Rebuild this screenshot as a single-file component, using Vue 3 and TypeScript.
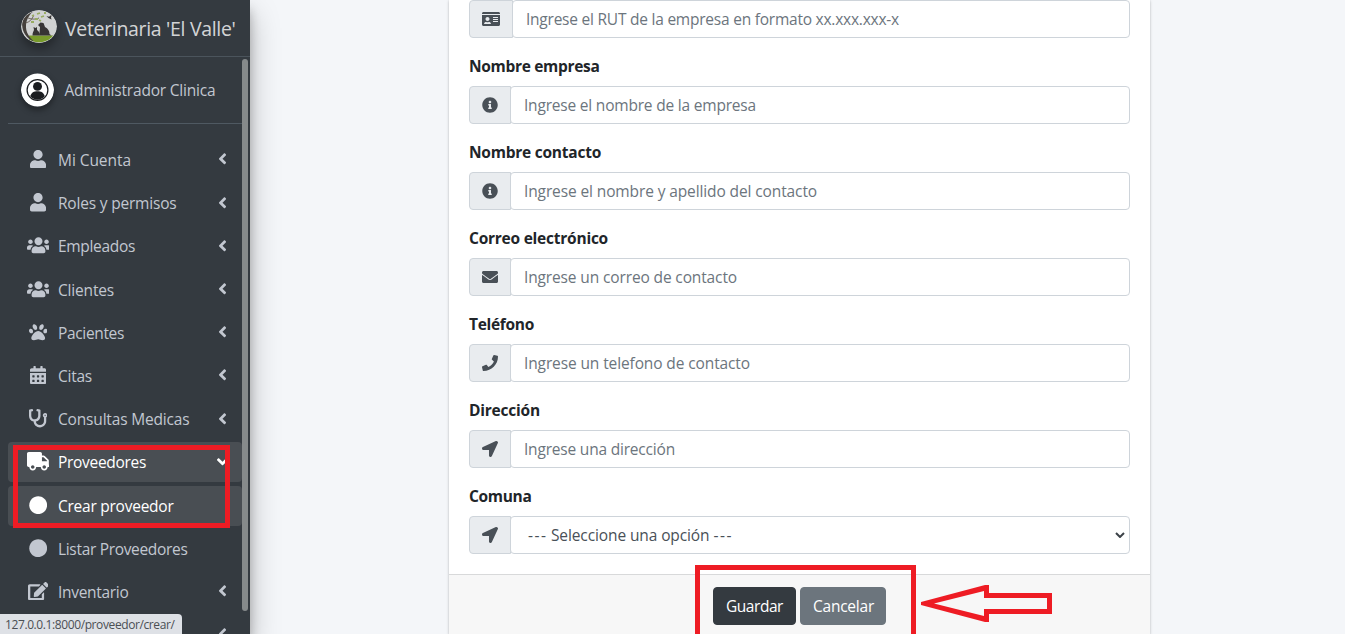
<script setup lang="ts">
interface Glyph { w: number; d: string }
interface NavItem { label: string; icon: string; width: number; state: 'closed' | 'open' | 'active' | 'leaf' }
interface Field { label: string; labelWidth: number; icon: string; hint: string; hintWidth: number; kind?: 'select' }

const cell = (x: number, y: number) =>
  `M${x} ${y}c0-6.600 5.400-12 12-12h40c6.600 0 12 5.400 12 12v40c0 6.600-5.400 12-12 12h-40c-6.600 0-12-5.400-12-12z`
const line = (y: number) =>
  `M352 ${y}c0-4.400 3.600-8 8-8h144c4.400 0 8 3.600 8 8v16c0 4.400-3.600 8-8 8H360c-4.400 0-8-3.600-8-8z`

const glyphs: Record<string, Glyph> = {
  user: { w: 448, d: 'M224 256c70.7 0 128-57.3 128-128S294.7 0 224 0 96 57.300 96 128s57.300 128 128 128zm89.600 32h-16.700c-22.200 10.200-46.900 16-72.900 16s-50.600-5.800-72.900-16h-16.700C60.200 288 0 348.200 0 422.400V464c0 26.500 21.500 48 48 48h352c26.500 0 48-21.500 48-48v-41.600c0-74.200-60.200-134.400-134.400-134.400z' },
  users: { w: 640, d: 'M96 224c35.300 0 64-28.700 64-64s-28.700-64-64-64-64 28.700-64 64 28.700 64 64 64zm448 0c35.300 0 64-28.700 64-64s-28.700-64-64-64-64 28.700-64 64 28.700 64 64 64zm32 32h-64c-17.600 0-33.500 7.100-45.100 18.600 40.300 22.100 68.900 62 75.100 109.400h66c17.700 0 32-14.300 32-32v-32c0-35.300-28.700-64-64-64zm-256 0c61.900 0 112-50.100 112-112S381.900 32 320 32 208 82.100 208 144s50.100 112 112 112zm76.800 32h-8.300c-20.800 10-43.900 16-68.500 16s-47.600-6-68.500-16h-8.300C179.600 288 128 339.600 128 403.200V432c0 26.500 21.500 48 48 48h288c26.500 0 48-21.500 48-48v-28.800c0-63.600-51.600-115.200-115.200-115.200zm-223.700-13.400C161.500 263.100 145.600 256 128 256H64c-35.300 0-64 28.700-64 64v32c0 17.700 14.300 32 32 32h65.900c6.300-47.400 34.900-87.300 75.200-109.400z' },
  paw: { w: 512, d: 'M256 224c-79.410 0-192 122.760-192 200.250 0 34.900 26.810 55.750 71.740 55.750 48.840 0 81.090-25.080 120.260-25.080 39.510 0 71.850 25.080 120.260 25.080 44.930 0 71.740-20.850 71.740-55.750C448 346.760 335.410 224 256 224zM108.720 211.390c-10.400-34.650-42.440-57.090-71.560-50.130s-44.290 40.690-33.890 75.340 42.440 57.090 71.560 50.130 44.290-40.690 33.890-75.340zM193.440 190.610c30.940-8.140 42.930-49.420 26.780-92.190s-54.340-70.860-85.280-62.720-42.930 49.420-26.780 92.190 54.340 70.860 85.280 62.720zM474.840 161.260c-29.120-6.960-61.160 15.480-71.560 50.130s4.770 68.380 33.890 75.340 61.160-15.480 71.560-50.130-4.770-68.380-33.890-75.340zM318.560 190.610c30.940 8.140 69.130-19.940 85.280-62.720s4.160-84.050-26.780-92.190-69.130 19.940-85.280 62.720-4.160 84.050 26.780 92.190z' },
  calendar: { w: 448, d: 'M0 464c0 26.500 21.500 48 48 48h352c26.500 0 48-21.500 48-48V192H0zM400 64h-48V16c0-8.800-7.200-16-16-16h-32c-8.800 0-16 7.200-16 16v48H160V16c0-8.800-7.200-16-16-16h-32c-8.800 0-16 7.200-16 16v48H48C21.500 64 0 85.500 0 112v48h448v-48c0-26.500-21.500-48-48-48z' + [64, 192, 320].map(x => cell(x, 268) + cell(x, 396)).join('') },
  stethoscope: { w: 512, d: 'M447.100 112c-34.200.5-62.300 28.400-63 62.600-.5 24.300 12.500 45.600 32 56.800V344c0 57.300-50.200 104-112 104-60 0-109.200-44.100-111.900-99.200C265 333.800 320 269.200 320 192V36.600c0-11.400-8.100-21.300-19.300-23.500L237.800.5c-13-2.600-25.600 5.800-28.200 18.800L206.400 35c-2.600 13 5.800 25.600 18.800 28.200l30.700 6.100v121.400c0 52.900-42.200 96.700-95.100 97.200-53.400.5-96.900-42.700-96.900-96V69.400l30.700-6.100c13-2.600 21.400-15.200 18.800-28.200l-3.100-15.700C107.700 6.400 95.100-2 82.100.6L19.300 13C8.100 15.300 0 25.100 0 36.600V192c0 77.300 55.100 142 128.100 156.800C130.700 439.200 208.600 512 304 512c97 0 176-75.400 176-168V231.400c19.100-11.100 32-31.700 32-55.400 0-35.700-29.200-64.500-64.900-64zm.9 80c-8.800 0-16-7.200-16-16s7.200-16 16-16 16 7.200 16 16-7.200 16-16 16z' },
  truck: { w: 640, d: 'M624 352h-16V243.900c0-12.700-5.100-24.900-14.100-33.900L494 110.100c-9-9-21.200-14.100-33.900-14.100H416V48c0-26.500-21.500-48-48-48H48C21.500 0 0 21.500 0 48v320c0 26.500 21.500 48 48 48h16c0 53 43 96 96 96s96-43 96-96h128c0 53 43 96 96 96s96-43 96-96h48c8.800 0 16-7.200 16-16v-32c0-8.800-7.200-16-16-16zM160 464c-26.500 0-48-21.500-48-48s21.500-48 48-48 48 21.500 48 48-21.500 48-48 48zm320 0c-26.500 0-48-21.500-48-48s21.500-48 48-48 48 21.500 48 48-21.500 48-48 48zm80-208H416V144h44.100l99.900 99.900z' },
  circle: { w: 512, d: 'M256 8C119 8 8 119 8 256s111 248 248 248 248-111 248-248S393 8 256 8z' },
  edit: { w: 576, d: 'M402.600 83.200l90.200 90.200c3.800 3.800 3.800 10 0 13.800L274.400 405.600l-92.800 10.300c-12.400 1.400-22.900-9.100-21.500-21.500l10.300-92.800L388.800 83.200c3.800-3.800 10-3.800 13.800 0zm162-22.900l-48.800-48.800c-15.200-15.200-39.900-15.200-55.200 0l-35.400 35.400c-3.800 3.800-3.800 10 0 13.800l90.200 90.200c3.800 3.800 10 3.800 13.800 0l35.400-35.400c15.200-15.300 15.200-40 0-55.200zM384 346.200V448H64V128h229.800c3.200 0 6.200-1.300 8.500-3.500l40-40c7.600-7.600 2.200-20.500-8.500-20.500H48C21.500 64 0 85.500 0 112v352c0 26.500 21.500 48 48 48h352c26.500 0 48-21.500 48-48V306.200c0-10.700-12.900-16-20.500-8.500l-40 40c-2.200 2.300-3.500 5.300-3.500 8.500z' },
  angle: { w: 256, d: 'M31.700 239l136-136c9.400-9.400 24.600-9.400 33.900 0l22.600 22.600c9.400 9.400 9.400 24.600 0 33.900L127.900 256l96.400 96.400c9.400 9.400 9.400 24.600 0 33.900L201.700 409c-9.400 9.400-24.600 9.400-33.900 0l-136-136c-9.500-9.400-9.500-24.600-.1-34z' },
  card: { w: 576, d: 'M528 32H48C21.500 32 0 53.500 0 80v16h576V80c0-26.500-21.500-48-48-48zM0 432c0 26.500 21.500 48 48 48h480c26.500 0 48-21.500 48-48V128H0zM176 192c35.300 0 64 28.700 64 64s-28.700 64-64 64-64-28.700-64-64 28.700-64 64-64zM67.100 396.200C75.500 370.500 99.600 352 128 352h8.200c12.300 5.100 25.700 8 39.800 8s27.600-2.900 39.800-8h8.200c28.400 0 52.500 18.500 60.900 44.200 3.200 9.900-5.200 19.800-15.600 19.800H82.700c-10.400 0-18.800-10-15.600-19.800z' + line(200) + line(264) + line(328) },
  info: { w: 512, d: 'M256 8C119 8 8 119 8 256s111 248 248 248 248-111 248-248S393 8 256 8zm0 110c23.200 0 42 18.800 42 42s-18.800 42-42 42-42-18.800-42-42 18.800-42 42-42zm56 254c0 6.600-5.400 12-12 12h-88c-6.600 0-12-5.400-12-12v-24c0-6.600 5.400-12 12-12h12v-64h-12c-6.600 0-12-5.400-12-12v-24c0-6.600 5.400-12 12-12h64c6.600 0 12 5.400 12 12v100h12c6.600 0 12 5.400 12 12z' },
  envelope: { w: 512, d: 'M502.300 190.800c3.900-3.100 9.700-.2 9.700 4.700V400c0 26.500-21.500 48-48 48H48c-26.500 0-48-21.500-48-48V195.600c0-5 5.700-7.800 9.700-4.700 22.400 17.400 52.100 39.500 154.100 113.600 21.100 15.400 56.700 47.800 92.200 47.600 35.700.3 72-32.800 92.300-47.600 102-74.100 131.600-96.300 154-113.700zM256 320c23.200.4 56.600-29.200 73.400-41.400 132.700-96.300 142.800-104.700 173.400-128.700 5.800-4.500 9.200-11.500 9.200-18.900v-19c0-26.500-21.500-48-48-48H48C21.500 64 0 85.500 0 112v19c0 7.400 3.400 14.300 9.200 18.900 30.600 23.900 40.700 32.400 173.400 128.700 16.800 12.200 50.200 41.800 73.400 41.400z' },
  phone: { w: 512, d: 'M493.400 24.600l-104-24c-11.300-2.600-22.900 3.300-27.500 13.900l-48 112c-4.200 9.800-1.400 21.300 6.900 28l60.600 49.600c-36 76.700-98.900 140.500-177.200 177.200l-49.600-60.600c-6.800-8.300-18.200-11.100-28-6.900l-112 48C3.900 366.500-2 378.100.6 389.400l24 104C27.100 504.200 36.700 512 48 512c256.100 0 464-207.500 464-464 0-11.200-7.700-20.900-18.600-23.400z' },
  arrow: { w: 512, d: 'M444.520 3.520L28.740 195.420c-47.970 22.390-31.980 92.750 19.190 92.750h175.910v175.910c0 51.170 70.360 67.170 92.750 19.190l191.900-415.780c15.990-38.390-25.590-79.970-63.970-63.970z' },
}

const nav: NavItem[] = [
  { label: 'Mi Cuenta', icon: 'user', width: 73, state: 'closed' },
  { label: 'Roles y permisos', icon: 'user', width: 118.5, state: 'closed' },
  { label: 'Empleados', icon: 'users', width: 77, state: 'closed' },
  { label: 'Clientes', icon: 'users', width: 56, state: 'closed' },
  { label: 'Pacientes', icon: 'paw', width: 66, state: 'closed' },
  { label: 'Citas', icon: 'calendar', width: 34, state: 'closed' },
  { label: 'Consultas Medicas', icon: 'stethoscope', width: 131.5, state: 'closed' },
  { label: 'Proveedores', icon: 'truck', width: 88, state: 'open' },
  { label: 'Crear proveedor', icon: 'circle', width: 115.5, state: 'active' },
  { label: 'Listar Proveedores', icon: 'circle', width: 129.5, state: 'leaf' },
  { label: 'Inventario', icon: 'edit', width: 70.5, state: 'closed' },
  { label: '', icon: 'edit', width: 0, state: 'closed' },
]

const fields: Field[] = [
  { label: '', labelWidth: 0, icon: 'card', hint: 'Ingrese el RUT de la empresa en formato xx.xxx.xxx-x', hintWidth: 373 },
  { label: 'Nombre empresa', labelWidth: 130.5, icon: 'info', hint: 'Ingrese el nombre de la empresa', hintWidth: 232 },
  { label: 'Nombre contacto', labelWidth: 132, icon: 'info', hint: 'Ingrese el nombre y apellido del contacto', hintWidth: 293 },
  { label: 'Correo electrónico', labelWidth: 139, icon: 'envelope', hint: 'Ingrese un correo de contacto', hintWidth: 213 },
  { label: 'Teléfono', labelWidth: 65, icon: 'phone', hint: 'Ingrese un telefono de contacto', hintWidth: 226 },
  { label: 'Dirección', labelWidth: 71, icon: 'arrow', hint: 'Ingrese una dirección', hintWidth: 151 },
  { label: 'Comuna', labelWidth: 62.5, icon: 'arrow', hint: 'Seleccione una opción', hintWidth: 158.5, kind: 'select' },
]

// Spreads the difference to the wanted width evenly over the letters.
const vFit = {
  mounted(el: HTMLElement, binding: { value: number }) {
    const count = (el.textContent ?? '').length
    if (count && binding.value) {
      const delta = (binding.value - el.getBoundingClientRect().width) / count
      el.style.letterSpacing = `${delta.toFixed(3)}px`
    }
  },
}
</script>

<template>
  <div class="page">
    <aside class="sidebar">
      <header class="brand">
        <svg class="logo" viewBox="0 0 36 33">
          <defs><clipPath id="disc"><ellipse cx="18" cy="16.500" rx="17.300" ry="15.800" /></clipPath></defs>
          <ellipse cx="18" cy="16.500" rx="18" ry="16.500" fill="#d0d2d2" />
          <g clip-path="url(#disc)">
            <rect x="8" y="25.500" width="28" height="8" fill="#789b2b" />
            <path d="M13 1C3 3 0 10 1.500 18c1 6 6 12 12 14C8 27 4.500 22 5 15c.5-6 3.500-11 8-14z" fill="#45403c" />
            <path d="M4.500 13c4-1 6-3 8-7M7 8c4 1.500 8 1.500 11 0" fill="none" stroke="#5b5148" stroke-width=".8" />
            <path d="M11 6l2-1M16 4l3-1M20 7l3-1M10 12l3 0M14 9l3 0M18 10l2 1M23 3l2 0" stroke="#98ac62" stroke-width="1.800" />
            <path d="M19 25.500c-1-3 0-6 0-8.500l-2-2 2.500-2.500 3 .5 1.500 4c3 1.500 4.500 4 4.500 7l2 1.500zM11.500 25.500c0-3 1-4 1.500-5.500l-.5-3 2 1 1.500-1v3c2 1 2.500 3 3 5.500z" fill="#363434" />
            <path d="M25.500 6l2.500.8L31 4.500l-1 3 .5 2-3-1.500z" fill="#363434" />
          </g>
        </svg>
        <span v-fit="170.500" class="brand-name">Veterinaria 'El Valle'</span>
      </header>
      <div class="account">
        <svg class="avatar" viewBox="0 0 34 34">
          <circle cx="17" cy="17" r="17" fill="#fff" />
          <circle cx="17" cy="17" r="10.700" fill="none" stroke="#1b1d20" stroke-width="1.300" />
          <circle cx="17" cy="13.300" r="4.600" fill="#1b1d20" />
          <path d="M9.500 23.500c1-4 4-5.300 7.500-5.300s6.500 1.300 7.500 5.300c-4 4.700-11 4.700-15 0z" fill="#1b1d20" />
        </svg>
        <span v-fit="151" class="account-name">Administrador Clinica</span>
      </div>
      <nav class="menu">
        <div v-for="(item, i) in nav" :key="i" class="item" :class="item.state">
          <span class="item-icon">
            <svg :viewBox="`0 0 ${glyphs[item.icon].w} 512`"><path fill-rule="evenodd" :d="glyphs[item.icon].d" /></svg>
          </span>
          <span v-fit="item.width" class="item-label">{{ item.label }}</span>
          <svg v-if="item.state === 'closed' || item.state === 'open'" class="angle" viewBox="0 0 256 512"><path :d="glyphs.angle.d" /></svg>
        </div>
      </nav>
      <div class="thumb"></div>
    </aside>

    <main class="content">
      <section class="card">
        <div class="card-body">
          <div v-for="(field, i) in fields" :key="i" class="field">
            <div v-if="field.label" class="label"><span v-fit="field.labelWidth">{{ field.label }}</span></div>
            <div class="group">
              <span class="addon">
                <svg :viewBox="`0 0 ${glyphs[field.icon].w} 512`"><path fill-rule="evenodd" :d="glyphs[field.icon].d" /></svg>
              </span>
              <div class="control" :class="field.kind">
                <span v-if="field.kind" v-fit="19.500" class="dashes">---</span>
                <span v-fit="field.hintWidth">{{ field.hint }}</span>
                <span v-if="field.kind" v-fit="19.500" class="dashes">---</span>
                <svg v-if="field.kind" class="caret" viewBox="0 0 10 6"><path d="M1 1l4 4 4-4" /></svg>
              </div>
            </div>
          </div>
        </div>
        <footer class="card-footer">
          <button class="btn save" type="button"><span v-fit="57">Guardar</span></button>
          <button class="btn cancel" type="button"><span v-fit="61">Cancelar</span></button>
        </footer>
      </section>
    </main>

    <div class="mark mark-menu"></div>
    <div class="mark mark-actions"></div>
    <svg class="pointer" viewBox="0 0 134 40"><path fill-rule="evenodd" d="M2 19L66 2h4v8h63v21H70v8h-4L2 22zM15 20.500L65 33v-7h63V15H65V8z" /></svg>
    <div class="status"><span v-fit="169.500">127.0.0.1:8000/proveedor/crear/</span></div>
  </div>
</template>

<style>
html, body { margin: 0; overflow: hidden; }
</style>

<style scoped>
.page, .page * { box-sizing: border-box; }
.page { position: relative; display: flex; width: 1345px; height: 634px; overflow: hidden; background: #f4f6f9; font: 400 15.500px/24px "Open Sans", "Noto Sans", sans-serif; color: #212529; }
.page span { white-space: nowrap; }
.sidebar { position: relative; z-index: 1; flex: 0 0 250px; height: 634px; background: #343a40; color: #c2c7d0; box-shadow: 0 14px 28px rgba(0,0,0,.25), 0 10px 10px rgba(0,0,0,.22); }
.brand { display: flex; align-items: center; height: 57px; padding: 0 0 4px 21px; border-bottom: 1px solid #4b545c; color: rgba(255,255,255,.8); }
.logo { flex: none; width: 36px; height: 33px; margin-right: 8px; border-radius: 50%; box-shadow: 0 6px 8px rgba(0,0,0,.3); }
.brand-name { font-size: 19.500px; line-height: 30px; padding-top: 5px; }
.account { display: flex; align-items: center; height: 67px; margin: 0 8px; padding: 0 0 0 13px; border-bottom: 1px solid #4f5962; }
.avatar { flex: none; width: 33px; height: 34px; margin-right: 10.500px; border-radius: 50%; box-shadow: 0 3px 6px rgba(0,0,0,.4); }
.menu { display: flex; flex-direction: column; gap: 3.200px; padding: 16px 8px 0; }
.item { display: flex; flex: none; align-items: center; height: 40px; padding-left: 16px; border-radius: 4px; }
.item-icon { display: flex; justify-content: center; flex: 0 0 28px; margin-right: 6px; padding-bottom: 1.600px; }
.item-icon svg { height: 18.400px; width: auto; fill: currentColor; }
.angle { width: 9px; height: 17.600px; margin: -1.600px 15.500px 0 auto; fill: currentColor; }
.open, .active { background: #494e53; color: #fff; }
.open .angle { transform: rotate(-90deg); }
.thumb { position: absolute; left: 242px; top: 59px; width: 6px; height: 552px; border-radius: 3px; background: #868a8b; }
.content { flex: 1; padding-left: 199px; }
.card { display: flex; flex-direction: column; width: 701px; height: 634px; background: #fff; box-shadow: 0 0 1px rgba(0,0,0,.13), 0 1px 3px rgba(0,0,0,.2); }
.card-body { display: flex; flex-direction: column; gap: 16px; height: 574px; padding: 0 20px; }
.label { height: 24px; margin-bottom: 8px; font-weight: 700; font-size: 15.500px; }
.group { display: flex; height: 38px; }
.addon { display: flex; align-items: center; padding: 0 12.400px 0 12px; border: 1px solid #ced4da; border-radius: 4px 0 0 4px; background: #e9ecef; }
.addon svg { height: 16px; width: auto; fill: #495057; }
.control { display: flex; align-items: center; flex: 1; margin-left: -1px; padding: 0 12px 0 12.600px; border: 1px solid #ced4da; border-radius: 4px; background: #fff; color: #6c757d; }
.select { padding: 0 4px 0 16.600px; color: #495057; }
.dashes:first-child { margin-right: 3.500px; }
.dashes:not(:first-child) { margin-left: 4px; }
.caret { width: 10px; height: 6px; margin-left: auto; fill: none; stroke: #3c4248; stroke-width: 2; }
.card-footer { display: flex; justify-content: center; gap: 4px; flex: 1; padding: 12px 0 0; border-top: 1px solid #d8d9da; background: #f7f7f7; }
.btn { height: 38px; padding: 0 12px; border: 1px solid; border-radius: 4px; color: #fff; font: inherit; }
.save { width: 83px; border-color: #343a40; background: #343a40; }
.cancel { width: 86px; border-color: #6c757d; background: #6c757d; }
.mark { position: absolute; z-index: 2; border: 5px solid #ee1c24; }
.mark-menu { left: 13px; top: 445px; width: 217px; height: 83px; }
.mark-actions { left: 695px; top: 565px; width: 221px; height: 80px; }
.pointer { position: absolute; z-index: 2; left: 919px; top: 583px; width: 134px; height: 40px; fill: #ee1c24; }
.status { position: absolute; z-index: 3; left: 0; bottom: 0; width: 182px; height: 20px; padding-left: 5px; border-top-right-radius: 4px; background: #dee1e6; color: #4b4f54; font-size: 12px; line-height: 21px; }
</style>
